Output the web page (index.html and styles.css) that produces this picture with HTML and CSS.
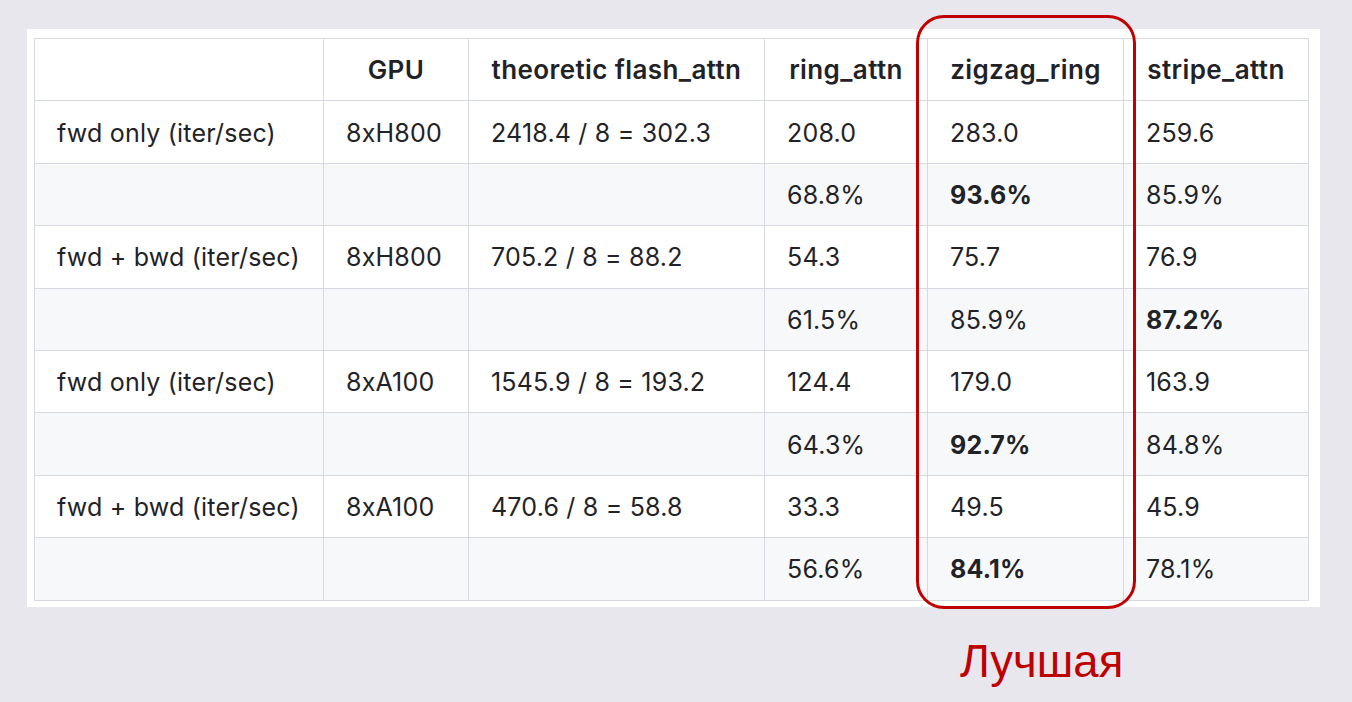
FILE: index.html
```html
<!DOCTYPE html>
<html lang="ru">
<head>
<meta charset="utf-8">
<title>Attention benchmark</title>
<link rel="stylesheet" href="styles.css">
</head>
<body>
<div class="page">
  <div class="panel">
    <table class="bench">
      <colgroup>
        <col class="c1"><col class="c2"><col class="c3"><col class="c4"><col class="c5"><col class="c6">
      </colgroup>
      <thead>
        <tr><th></th><th>GPU</th><th>theoretic flash_attn</th><th>ring_attn</th><th>zigzag_ring</th><th>stripe_attn</th></tr>
      </thead>
      <tbody>
        <tr><td>fwd only (iter/sec)</td><td>8xH800</td><td>2418.4 / 8 = 302.3</td><td>208.0</td><td>283.0</td><td>259.6</td></tr>
        <tr><td></td><td></td><td></td><td>68.8%</td><td><b>93.6%</b></td><td>85.9%</td></tr>
        <tr><td>fwd + bwd (iter/sec)</td><td>8xH800</td><td>705.2 / 8 = 88.2</td><td>54.3</td><td>75.7</td><td>76.9</td></tr>
        <tr><td></td><td></td><td></td><td>61.5%</td><td>85.9%</td><td><b>87.2%</b></td></tr>
        <tr><td>fwd only (iter/sec)</td><td>8xA100</td><td>1545.9 / 8 = 193.2</td><td>124.4</td><td>179.0</td><td>163.9</td></tr>
        <tr><td></td><td></td><td></td><td>64.3%</td><td><b>92.7%</b></td><td>84.8%</td></tr>
        <tr><td>fwd + bwd (iter/sec)</td><td>8xA100</td><td>470.6 / 8 = 58.8</td><td>33.3</td><td>49.5</td><td>45.9</td></tr>
        <tr><td></td><td></td><td></td><td>56.6%</td><td><b>84.1%</b></td><td>78.1%</td></tr>
      </tbody>
    </table>
  </div>
  <div class="caption">Лучшая</div>
  <div class="highlight"></div>
</div>
</body>
</html>
```

FILE: styles.css
```css
html, body {
  margin: 0;
  padding: 0;
  background: #e8e7ee;
}
.page {
  position: relative;
  width: 1352px;
  height: 702px;
  box-sizing: border-box;
  padding: 29px 0 0 27px;
}
.panel {
  width: 1293px;
  box-sizing: border-box;
  background: #ffffff;
  padding: 9px 12px 6px 7px;
}
.bench {
  border-collapse: collapse;
  table-layout: fixed;
  width: 1274px;
  font-family: "Inter", "Liberation Sans", sans-serif;
  font-size: 25px;
  letter-spacing: 0.2px;
  color: #1f2328;
}
.c1 { width: 289px; }
.c2 { width: 145px; }
.c3 { width: 296px; }
.c4 { width: 163px; }
.c5 { width: 196px; }
.c6 { width: 185px; }
.bench th, .bench td {
  border: 1px solid #d6dae0;
  padding: 0 22px;
  height: 62.4px;
  box-sizing: border-box;
  white-space: nowrap;
}
.bench th {
  font-weight: 600;
  font-size: 26px;
  letter-spacing: 0.4px;
  text-align: center;
}
.bench td {
  text-align: left;
  font-weight: 400;
  padding-top: 1px;
}
.bench td b {
  font-weight: 700;
}
.bench tbody tr:nth-child(2n) {
  background: #f6f8fa;
}
.caption {
  margin: 32px 0 0 933px;
  font-family: "Liberation Sans", Arial, sans-serif;
  font-size: 45.5px;
  line-height: 45.5px;
  color: #c00000;
}
.highlight {
  position: absolute;
  left: 916px;
  top: 15px;
  width: 220px;
  height: 594px;
  box-sizing: border-box;
  border: 3px solid #c00000;
  border-radius: 28px;
}
```
